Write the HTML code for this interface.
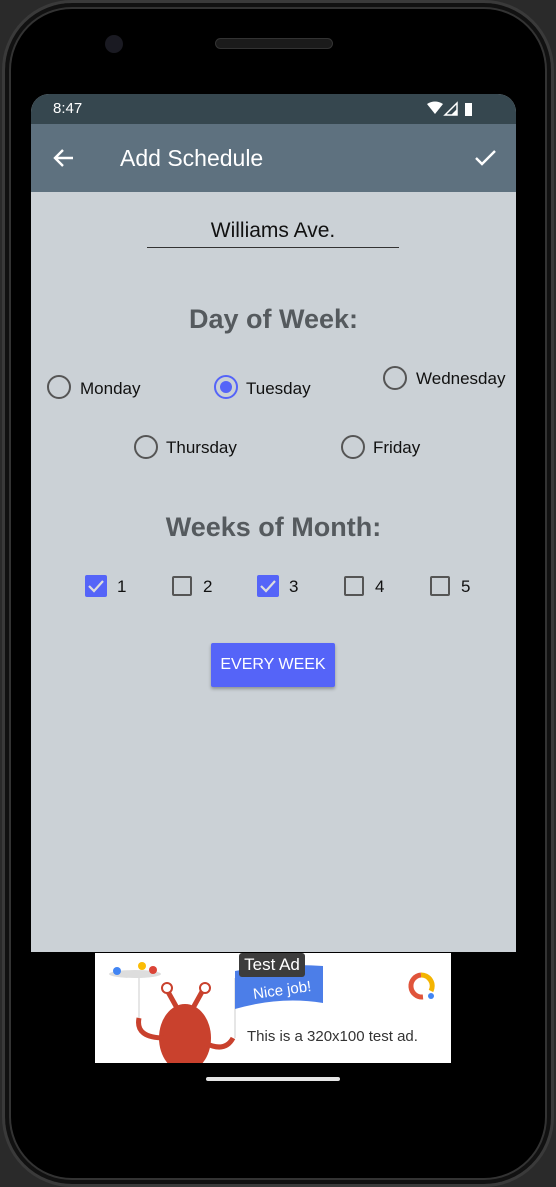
<!DOCTYPE html>
<html><head><style>
*{margin:0;padding:0;box-sizing:border-box}
body{width:556px;height:1187px;background:#2a2a2a;position:relative;overflow:hidden;font-family:"Liberation Sans",Roboto,sans-serif}
.phone{position:absolute;left:2px;top:0;width:552px;height:1187px;background:#000;border-radius:70px;border:3px solid #3a3a3a;box-shadow:inset 0 0 0 4px #111,inset 0 0 0 6px #333}
.abs{position:absolute}
.screen{left:31px;top:94px;width:485px;height:858px;border-radius:18px 18px 0 0;overflow:hidden;background:#cbd1d6}
.sb{left:0;top:0;width:485px;height:30px;background:#36474f;color:#fff;font-size:15px}
.tb{left:0;top:30px;width:485px;height:68px;background:#5e717f;color:#fff}
.txt{color:#111;font-size:17px}
.h{color:#555a5e;font-weight:bold;font-size:27px;width:485px;text-align:center}
.rad{width:24px;height:24px;border:2px solid #555;border-radius:50%}
.cb{width:20px;height:20px;border:2px solid #555;border-radius:2px}
.cbon{width:22px;height:22px;background:#5564f8;border-radius:2px}
</style></head><body>
<div class="phone"></div>
<div class="abs" style="left:105px;top:35px;width:18px;height:18px;border-radius:50%;background:#1a1a22"></div>
<div class="abs" style="left:215px;top:38px;width:118px;height:11px;border-radius:6px;background:#1b1b1b;border:1px solid #333"></div>
<div class="abs screen">
 <div class="abs sb"><span class="abs" style="left:22px;top:6px">8:47</span>
  <svg class="abs" style="left:396px;top:7px" width="50" height="16"><path d="M0 3 Q8 -2 16 3 L8 13Z" fill="#fff"/><path d="M18 14 L30 2 L30 14Z" fill="none" stroke="#fff" stroke-width="1.5"/><path d="M24 14 L30 8 L30 14Z" fill="#fff"/><rect x="38" y="2" width="7" height="13" fill="#fff"/></svg>
 </div>
 <div class="abs tb">
  <svg class="abs" style="left:21px;top:24px" width="24" height="20"><path d="M21 10H3M11 2L3 10L11 18" stroke="#fff" stroke-width="2.4" fill="none"/></svg>
  <span class="abs" style="left:89px;top:21px;font-size:23px;font-weight:500">Add Schedule</span>
  <svg class="abs" style="left:443px;top:24px" width="24" height="20"><path d="M2 10L8 16L21 3" stroke="#fff" stroke-width="2.4" fill="none"/></svg>
 </div>
 <div class="abs txt" style="left:116px;top:125px;width:252px;text-align:center;font-size:21px">Williams Ave.</div>
 <div class="abs" style="left:116px;top:153px;width:252px;height:1px;background:#333"></div>
 <div class="abs h" style="left:0;top:210px">Day of Week:</div>
 <div class="abs rad" style="left:16px;top:281px"></div><span class="abs txt" style="left:49px;top:285px">Monday</span>
 <div class="abs rad" style="left:183px;top:281px;border-color:#5564f8"><div style="margin:4px;width:12px;height:12px;border-radius:50%;background:#5564f8"></div></div><span class="abs txt" style="left:215px;top:285px">Tuesday</span>
 <div class="abs rad" style="left:352px;top:272px"></div><span class="abs txt" style="left:385px;top:275px">Wednesday</span>
 <div class="abs rad" style="left:103px;top:341px"></div><span class="abs txt" style="left:135px;top:344px">Thursday</span>
 <div class="abs rad" style="left:310px;top:341px"></div><span class="abs txt" style="left:342px;top:344px">Friday</span>
 <div class="abs h" style="left:0;top:418px">Weeks of Month:</div>
 <div class="abs cbon" style="left:54px;top:481px"><svg width="22" height="22"><path d="M4 11L9 16L18 6" stroke="#ddd" stroke-width="2.2" fill="none"/></svg></div><span class="abs txt" style="left:86px;top:483px">1</span>
 <div class="abs cb" style="left:141px;top:482px"></div><span class="abs txt" style="left:172px;top:483px">2</span>
 <div class="abs cbon" style="left:226px;top:481px"><svg width="22" height="22"><path d="M4 11L9 16L18 6" stroke="#ddd" stroke-width="2.2" fill="none"/></svg></div><span class="abs txt" style="left:258px;top:483px">3</span>
 <div class="abs cb" style="left:313px;top:482px"></div><span class="abs txt" style="left:344px;top:483px">4</span>
 <div class="abs cb" style="left:399px;top:482px"></div><span class="abs txt" style="left:430px;top:483px">5</span>
 <div class="abs" style="left:180px;top:549px;width:124px;height:44px;background:#5564f8;color:#fff;font-size:16px;font-weight:500;text-align:center;line-height:44px;border-radius:2px;box-shadow:0 2px 3px rgba(0,0,0,.3)">EVERY WEEK</div>
</div>
<div class="abs" style="left:95px;top:953px;width:356px;height:110px;background:#fff">
 <svg class="abs" style="left:10px;top:5px" width="140" height="105">
  <ellipse cx="30" cy="16" rx="26" ry="4" fill="#ddd"/><circle cx="12" cy="13" r="4" fill="#4285f4"/><circle cx="37" cy="8" r="4" fill="#fbbc05"/><circle cx="48" cy="12" r="4" fill="#db4437"/>
  <line x1="34" y1="20" x2="34" y2="60" stroke="#ccc"/><line x1="130" y1="20" x2="130" y2="80" stroke="#ccc"/>
  <ellipse cx="80" cy="80" rx="26" ry="34" fill="#c9412d"/>
  <path d="M34 60 Q30 80 60 80 M128 80 Q120 95 100 85 M72 50 L62 32 M88 50 L98 32" stroke="#c9412d" stroke-width="5" fill="none"/>
  <circle cx="62" cy="30" r="5" fill="#fff" stroke="#c9412d" stroke-width="2"/><circle cx="100" cy="30" r="5" fill="#fff" stroke="#c9412d" stroke-width="2"/>
 </svg>
 <svg class="abs" style="left:140px;top:8px" width="90" height="50"><path d="M0 10 Q45 2 88 5 L88 42 Q45 35 0 48Z" fill="#4c7ee8"/><text x="18" y="35" fill="#fff" font-size="15" font-family="Liberation Sans" transform="rotate(-8 40 30)">Nice job!</text></svg>
 <svg class="abs" style="left:312px;top:18px" width="30" height="30"><path d="M14 4 A11 11 0 1 0 16 26" stroke="#e0543b" stroke-width="5" fill="none"/><path d="M14 4 A11 11 0 0 1 24 20" stroke="#f4b400" stroke-width="5" fill="none"/><circle cx="24" cy="25" r="3" fill="#4285f4"/></svg>
 <span class="abs" style="left:152px;top:75px;font-size:15px;color:#333">This is a 320x100 test ad.</span>
</div>
<div class="abs" style="left:239px;top:953px;width:66px;height:24px;background:#3c3c3c;color:#fff;font-size:17px;text-align:center;line-height:24px;border-radius:3px">Test Ad</div>
<div class="abs" style="left:206px;top:1077px;width:134px;height:4px;border-radius:2px;background:#e5e5e5"></div>
</body></html>
